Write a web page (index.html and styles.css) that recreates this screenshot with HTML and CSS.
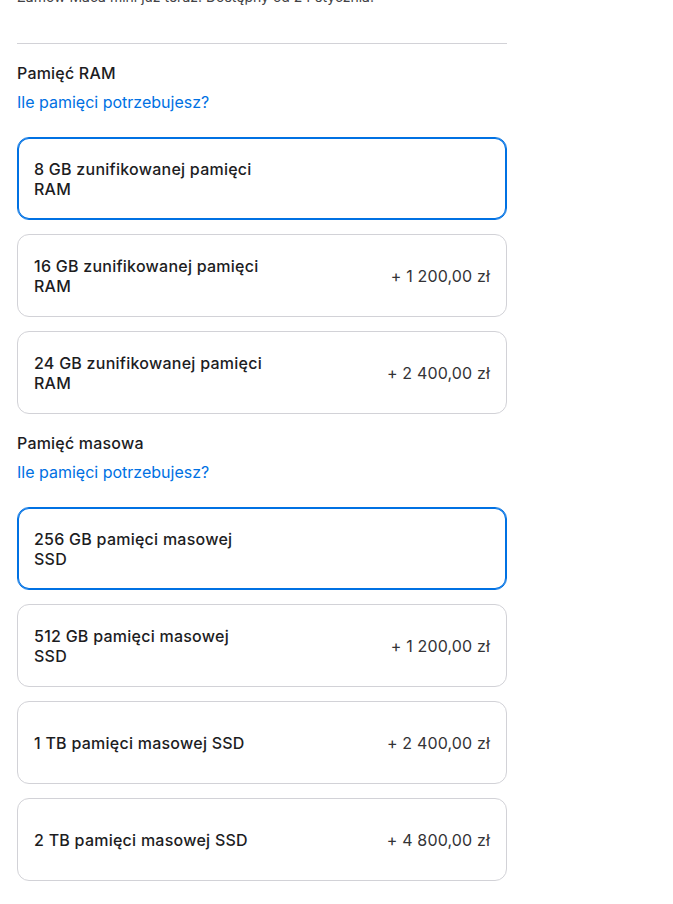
FILE: index.html
```html
<!DOCTYPE html>
<html lang="pl">
	<head>
		<meta charset="utf-8">
		<title>Mac mini - konfiguracja</title>
		<link rel="stylesheet" href="styles.css">
	</head>
	<body>
		<div class="config">
			<p class="note">Zamów Maca mini już teraz. Dostępny od 24 stycznia.</p>
			<hr class="divider">

			<div class="group">
				<h3 class="group-title">Pamięć RAM</h3>
				<a href="#" class="help">Ile pamięci potrzebujesz?</a>
				<ul class="options">
					<li class="option selected"><span class="label">8 GB zunifikowanej pamięci RAM</span></li>
					<li class="option"><span class="label">16 GB zunifikowanej pamięci RAM</span><span class="price">+ 1 200,00 zł</span></li>
					<li class="option"><span class="label">24 GB zunifikowanej pamięci RAM</span><span class="price">+ 2 400,00 zł</span></li>
				</ul>
			</div>

			<div class="group">
				<h3 class="group-title">Pamięć masowa</h3>
				<a href="#" class="help">Ile pamięci potrzebujesz?</a>
				<ul class="options">
					<li class="option selected"><span class="label">256 GB pamięci masowej SSD</span></li>
					<li class="option"><span class="label">512 GB pamięci masowej SSD</span><span class="price">+ 1 200,00 zł</span></li>
					<li class="option"><span class="label">1 TB pamięci masowej SSD</span><span class="price">+ 2 400,00 zł</span></li>
					<li class="option"><span class="label">2 TB pamięci masowej SSD</span><span class="price">+ 4 800,00 zł</span></li>
				</ul>
			</div>
		</div>
	</body>
</html>
```

FILE: styles.css
```css
/* reset */
*{
	margin: 0;
	padding: 0;
	box-sizing: border-box;
}
body{
	background: #fff;
	font-family: Inter, "Noto Sans", "Liberation Sans", sans-serif;
	color: #1d1d1f;
	overflow: hidden;
}
.config{
	width: 490px;
	margin-left: 17px;
}
.note{
	margin-top: -13px;
	font-size: 14px;
	line-height: 20px;
	color: #424245;
}
.divider{
	border: 0;
	border-top: 1px solid #d2d2d7;
	margin-top: 36px;
}
.group{
	padding-top: 17px;
}
.group-title{
	font-size: 16px;
	font-weight: 500;
	line-height: 24px;
	letter-spacing: 0.2px;
}
.help{
	display: block;
	margin-top: 6px;
	font-size: 16px;
	line-height: 22px;
	color: #0071e3;
	text-decoration: none;
}
.options{
	list-style: none;
	margin-top: 24px;
	display: flex;
	flex-direction: column;
	gap: 14px;
}
.option{
	min-height: 83px;
	padding: 0 16px;
	border: 1px solid #d2d2d7;
	border-radius: 12px;
	display: flex;
	align-items: center;
	justify-content: space-between;
	cursor: pointer;
}
.option.selected{
	border-color: #0071e3;
	box-shadow: inset 0 0 0 1px #0071e3;
}
.label{
	width: 232px;
	font-size: 16px;
	font-weight: 500;
	line-height: 20px;
	letter-spacing: 0.25px;
}
.price{
	font-size: 16px;
	line-height: 20px;
	letter-spacing: 0.15px;
	color: #333336;
}
```
